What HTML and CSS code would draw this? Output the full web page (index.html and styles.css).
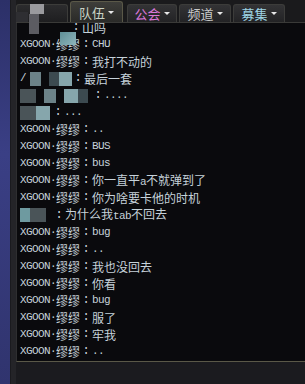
FILE: index.html
```html
<!DOCTYPE html>
<html lang="zh-CN">
  <head>
    <meta charset="UTF-8" />
    <meta name="viewport" content="width=device-width, initial-scale=1.0" />
    <title>聊天窗口</title>
    <link rel="stylesheet" href="styles.css">
  </head>
  <body>
    <div class="side-blue"></div>
    <div class="side-frame"></div>

    <div class="panel">
      <!-- タブ -->
      <div class="tabs">
        <div class="tab tab-avatar"></div>
        <div class="tab active team">队伍<span class="arrow"></span></div>
        <div class="tab guild">公会<span class="arrow"></span></div>
        <div class="tab channel">频道<span class="arrow"></span></div>
        <div class="tab recruit">募集<span class="arrow"></span></div>
      </div>

      <!-- チャット -->
      <div class="chat">
        <div class="lines">
          <div class="line"><span class="mos m0"></span><span class="colon">:</span>山吗</div>
          <div class="line"><span class="name"><span class="en">XGOON·</span>缪缪</span><span class="colon">:</span><span class="en">CHU</span></div>
          <div class="line"><span class="name"><span class="en">XGOON·</span>缪缪</span><span class="colon">:</span>我打不动的</div>
          <div class="line"><span class="en slash">/</span><span class="mos m3"><i class="a"></i><i class="b"></i><i class="c"></i></span><span class="colon">:</span>最后一套</div>
          <div class="line"><span class="mos m4"><i class="d"></i><i class="a"></i><i class="c"></i><i class="b"></i></span><span class="colon">:</span><span class="en">....</span></div>
          <div class="line"><span class="mos m5"><i class="d"></i><i class="c"></i></span><span class="colon">:</span><span class="en">...</span></div>
          <div class="line"><span class="name"><span class="en">XGOON·</span>缪缪</span><span class="colon">:</span><span class="en">..</span></div>
          <div class="line"><span class="name"><span class="en">XGOON·</span>缪缪</span><span class="colon">:</span><span class="en">BUS</span></div>
          <div class="line"><span class="name"><span class="en">XGOON·</span>缪缪</span><span class="colon">:</span><span class="en">bus</span></div>
          <div class="line"><span class="name"><span class="en">XGOON·</span>缪缪</span><span class="colon">:</span><span class="msg">你一直平<span class="en">a</span>不就弹到了</span></div>
          <div class="line"><span class="name"><span class="en">XGOON·</span>缪缪</span><span class="colon">:</span>你为啥要卡他的时机</div>
          <div class="line"><span class="mos m11"><i class="b"></i><i class="d"></i></span><span class="colon">:</span><span class="msg">为什么我<span class="en">tab</span>不回去</span></div>
          <div class="line"><span class="name"><span class="en">XGOON·</span>缪缪</span><span class="colon">:</span><span class="en">bug</span></div>
          <div class="line"><span class="name"><span class="en">XGOON·</span>缪缪</span><span class="colon">:</span><span class="en">..</span></div>
          <div class="line"><span class="name"><span class="en">XGOON·</span>缪缪</span><span class="colon">:</span>我也没回去</div>
          <div class="line"><span class="name"><span class="en">XGOON·</span>缪缪</span><span class="colon">:</span>你看</div>
          <div class="line"><span class="name"><span class="en">XGOON·</span>缪缪</span><span class="colon">:</span><span class="en">bug</span></div>
          <div class="line"><span class="name"><span class="en">XGOON·</span>缪缪</span><span class="colon">:</span>服了</div>
          <div class="line"><span class="name"><span class="en">XGOON·</span>缪缪</span><span class="colon">:</span>牢我</div>
          <div class="line"><span class="name"><span class="en">XGOON·</span>缪缪</span><span class="colon">:</span><span class="en">..</span></div>
        </div>
      </div>

      <div class="bottom"></div>
    </div>

    <!-- アバターのモザイク -->
    <div class="avatar-mosaic">
      <i class="p1"></i><i class="p2"></i><i class="p3"></i><i class="p4"></i>
    </div>
  </body>
</html>
```

FILE: styles.css
```css
body {
  margin: 0;
  width: 305px;
  height: 384px;
  overflow: hidden;
  display: flex;
  background-color: #18181c;
  font-family: "Noto Sans CJK SC", "Liberation Mono", monospace;
  position: relative;
}
.side-blue {
  width: 10px;
  background: linear-gradient(180deg, #2c3068 0%, #3a3f85 40%, #30346e 100%);
}
.side-frame {
  width: 6px;
  background-color: #242428;
  border-left: 1px solid #1a1a1e;
  box-sizing: border-box;
}
.panel {
  flex: 1;
  display: flex;
  flex-direction: column;
  min-width: 0;
}
.tabs {
  height: 23px;
  flex: none;
  display: flex;
  align-items: flex-end;
  background-color: #1a1a1c;
  border-bottom: 1px solid #3a3a38;
  box-sizing: border-box;
}
.tab {
  height: 18px;
  margin-right: 2px;
  display: flex;
  align-items: center;
  justify-content: center;
  font-size: 13px;
  background: linear-gradient(180deg, #333335 0%, #232325 100%);
  border: 1px solid #3c3c3a;
  border-bottom: none;
  border-radius: 3px 3px 0 0;
  box-sizing: border-box;
}
.tab-avatar {
  width: 52px;
  background: linear-gradient(180deg, #2c2c2e 0%, #1e1e20 100%);
}
.team {
  width: 53px;
  height: 21px;
  color: #c8d2c4;
  background: linear-gradient(180deg, #3e3e3a 0%, #2a2a28 100%);
  border-color: #5a5848;
}
.guild {
  width: 50px;
  margin-left: 2px;
  color: #d877d8;
}
.channel {
  width: 52px;
  color: #c8c8c8;
}
.recruit {
  width: 52px;
  color: #9fd6e6;
}
.arrow {
  width: 0;
  height: 0;
  margin-left: 3px;
  border-left: 3px solid transparent;
  border-right: 3px solid transparent;
  border-top: 3px solid #e8e8e8;
}
.chat {
  height: 339px;
  flex: none;
  overflow: hidden;
  background-color: #0a0a0d;
  border-left: 1px solid #2e2e30;
  border-bottom: 1px solid #5a5848;
  box-sizing: border-box;
}
.lines {
  margin-top: -4px;
  padding-left: 3px;
}
.line {
  height: 17.06px;
  line-height: 17px;
  font-size: 12px;
  color: #c6d2da;
  white-space: nowrap;
  display: flex;
  align-items: center;
}
.msg .en {
  font-size: 11px;
}
.name {
  width: 60px;
  display: flex;
  align-items: center;
  overflow: hidden;
}
.en {
  font-family: "Liberation Mono", monospace;
  font-size: 11px;
  letter-spacing: -0.6px;
}
.colon {
  width: 12px;
  text-align: center;
  font-family: "Liberation Mono", monospace;
  font-size: 12px;
}
.slash {
  width: 6px;
}
.mos {
  display: flex;
  height: 14px;
}
.mos i {
  display: block;
  height: 14px;
}
.mos .a { width: 12px; background-color: #6c8288; }
.mos .b { width: 10px; background-color: #3c4a50; }
.mos .c { width: 14px; background-color: #86a6ac; }
.mos .d { width: 16px; background-color: #4a5458; }
.m0 { width: 50px; }
.m3 { width: 46px; padding-left: 4px; box-sizing: border-box; }
.m3 .a { margin-right: 8px; }
.m4 { width: 72px; }
.m4 .a { margin: 0 8px; }
.m5 { width: 32px; }
.m11 { width: 33px; }
.m11 .b { background-color: #6e9aa0; }
.bottom {
  flex: 1;
  background-color: #1b1b1f;
}
.avatar-mosaic {
  position: absolute;
  left: 16px;
  top: 0;
  width: 62px;
  height: 46px;
}
.avatar-mosaic i {
  position: absolute;
  display: block;
}
.avatar-mosaic .p1 { left: 14px; top: 4px; width: 14px; height: 10px; background-color: #9a9a9e; }
.avatar-mosaic .p2 { left: 13px; top: 14px; width: 10px; height: 20px; background-color: #5c5c62; }
.avatar-mosaic .p3 { left: 0; top: 12px; width: 12px; height: 10px; background-color: #2e2e32; }
.avatar-mosaic .p4 { left: 44px; top: 32px; width: 16px; height: 13px; background: linear-gradient(135deg, #5e8e96, #8fb6bc); }
```
